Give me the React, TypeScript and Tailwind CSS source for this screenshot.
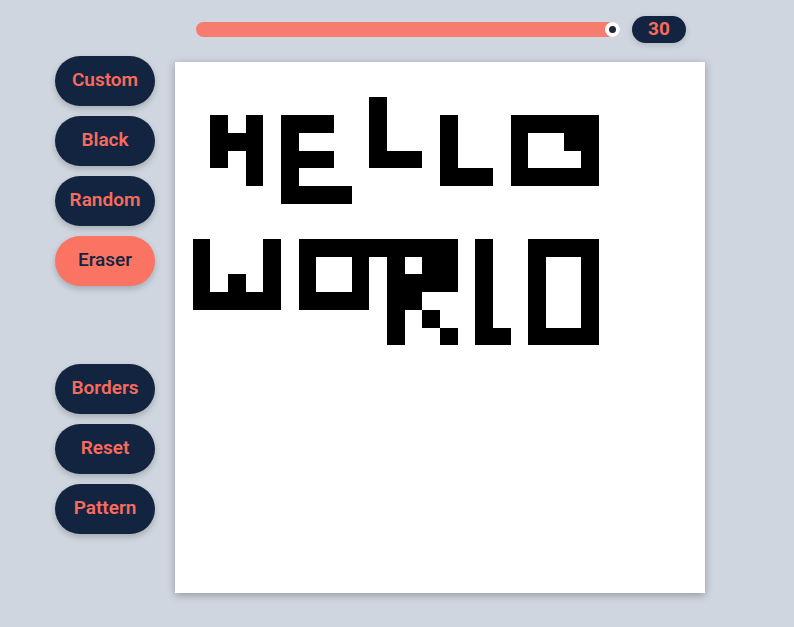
import { useState } from "react";

const SIZE = 30;

// black cells of the drawing, row -> columns
const drawing: Record<number, number[]> = {
  2: [11],
  3: [2, 4, 6, 7, 8, 11, 15, 19, 20, 21, 22, 23],
  4: [2, 3, 4, 6, 11, 15, 19, 22, 23],
  5: [2, 4, 6, 7, 8, 11, 12, 13, 15, 19, 23],
  6: [4, 6, 15, 16, 17, 19, 20, 21, 22, 23],
  7: [6, 7, 8, 9],
  10: [1, 5, 7, 8, 9, 10, 11, 12, 13, 14, 15, 17, 20, 21, 22, 23],
  11: [1, 5, 7, 10, 12, 14, 15, 17, 20, 23],
  12: [1, 3, 5, 7, 10, 12, 13, 14, 15, 17, 20, 23],
  13: [1, 2, 3, 4, 5, 7, 8, 9, 10, 12, 13, 17, 20, 23],
  14: [12, 14, 17, 20, 23],
  15: [12, 15, 17, 18, 20, 21, 22, 23],
};

const topButtons = ["Custom", "Black", "Random", "Eraser"];
const bottomButtons = ["Borders", "Reset", "Pattern"];

const ToolButton = ({ label, active }: { label: string; active?: boolean }) => {
  return (
    <button
      className={
        active
          ? "w-[100px] h-[50px] pb-px rounded-full bg-[#fa7363] text-[#13243f] text-[19px] font-medium shadow-[0_3px_6px_rgba(0,0,0,0.2)]"
          : "w-[100px] h-[50px] pb-px rounded-full bg-[#12243f] text-[#f86b5d] text-[19px] font-semibold shadow-[0_3px_6px_rgba(0,0,0,0.2)]"
      }
    >
      {label}
    </button>
  );
};

export default function App() {
  const [size] = useState(SIZE);

  const cells = [];
  for (let r = 0; r < size; r++) {
    for (let c = 0; c < size; c++) {
      const on = drawing[r]?.includes(c);
      cells.push(<div key={r + "-" + c} className={on ? "bg-black" : "bg-white"} />);
    }
  }

  return (
    <div
      className="min-h-screen w-full bg-[#cfd6df] flex items-start gap-5 pl-[55px] pt-4"
      style={{ fontFamily: "Roboto, 'Liberation Sans', sans-serif" }}
    >
      <div className="mt-10 flex flex-col">
        <div className="flex flex-col gap-[10px]">
          {topButtons.map((b) => (
            <ToolButton key={b} label={b} active={b === "Eraser"} />
          ))}
        </div>
        <div className="mt-[78px] flex flex-col gap-[10px]">
          {bottomButtons.map((b) => (
            <ToolButton key={b} label={b} />
          ))}
        </div>
      </div>

      <div className="w-[530px] flex flex-col">
        <div className="h-[27px] flex items-center pl-[21px] gap-3">
          <div className="relative w-[424px] h-[15px] rounded-full bg-[#f67c6f]">
            <div className="absolute right-0 top-0 w-[15px] h-[15px] rounded-full bg-white flex items-center justify-center">
              <div className="w-[7px] h-[7px] rounded-full bg-[#1e2a3c]" />
            </div>
          </div>
          <div className="w-[54px] h-[27px] rounded-full bg-[#12243f] text-[#f86b5d] text-[19px] font-bold flex items-center justify-center shadow-[0_2px_6px_rgba(0,0,0,0.15)]">
            {size}
          </div>
        </div>

        <div className="mt-[19px] w-[530px] h-[531px] bg-white grid grid-cols-[repeat(30,minmax(0,1fr))] grid-rows-[repeat(30,minmax(0,1fr))] shadow-[0_2px_8px_rgba(0,0,0,0.3)]">
          {cells}
        </div>
      </div>
    </div>
  );
}
